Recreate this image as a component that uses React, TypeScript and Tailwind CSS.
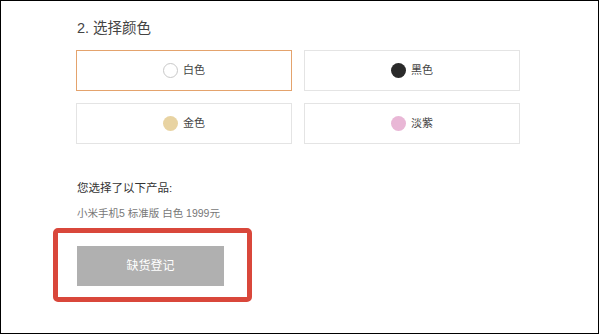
import { useState } from "react";

interface ColorOption {
  id: string;
  name: string;
  swatch: string;
}

const colors: ColorOption[] = [
  { id: "white", name: "白色", swatch: "bg-white border border-[#c8c8c8]" },
  { id: "black", name: "黑色", swatch: "bg-[#2a2a2a]" },
  { id: "gold", name: "金色", swatch: "bg-[#e8d3a2]" },
  { id: "purple", name: "淡紫", swatch: "bg-[#e9b7d6]" },
];

export default function App() {
  const [selected, setSelected] = useState("white");

  return (
    <div
      className="w-[599px] h-[334px] border border-black bg-white text-[#333]"
      style={{ fontFamily: '"Liberation Sans", "Noto Sans CJK SC", sans-serif' }}
    >
      <div className="pl-[76px] pt-[17px]">
        {/* 标题 */}
        <h2 className="text-[14.5px] leading-[20px] text-[#444]">2. 选择颜色</h2>

        {/* 颜色选项 */}
        <div className="mt-[12px] ml-[-1px] grid grid-cols-[216px_216px] gap-[12px]">
          {colors.map((c) => (
            <button
              key={c.id}
              onClick={() => setSelected(c.id)}
              className={`h-[41px] flex items-center justify-center gap-[5px] border ${
                selected === c.id ? "border-[#e4a36d]" : "border-[#e4e4e4]"
              }`}
            >
              <span className={`w-[15px] h-[15px] rounded-full ${c.swatch}`} />
              <span className="text-[11px] text-[#444]">{c.name}</span>
            </button>
          ))}
        </div>

        {/* 已选产品 */}
        <p className="mt-[37px] text-[11.5px] leading-[15px] text-[#333]">您选择了以下产品:</p>
        <p className="mt-[10px] text-[10.5px] leading-[14px] text-[#777]">小米手机5 标准版 白色 1999元</p>

        {/* 缺货登记 */}
        <div className="mt-[8px] ml-[-24px] w-[199px] h-[74px] border-[5px] border-[#d9473b] rounded-[5px] pl-[19px] pt-[13px]">
          <button className="w-[147px] h-[40px] bg-[#b0b0b0] text-white text-[12px]">缺货登记</button>
        </div>
      </div>
    </div>
  );
}
